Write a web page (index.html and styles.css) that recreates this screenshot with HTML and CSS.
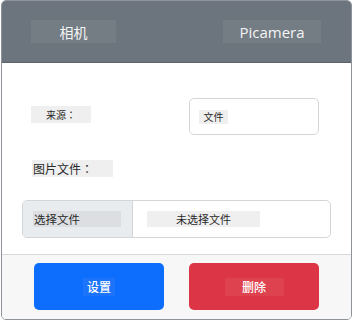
FILE: index.html
```html
<!DOCTYPE html>
<html lang="zh">
<head>
<meta charset="utf-8">
<link rel="stylesheet" href="styles.css">
</head>
<body>
<div class="card">
  <div class="card-header">
    <span class="hlabel hlabel-left">相机</span>
    <span class="hlabel hlabel-right">Picamera</span>
  </div>
  <div class="card-body">
    <div class="row-source">
      <span class="lbl lbl-source">来源<span class="colon" lang="ja">：</span></span>
      <div class="select-box"><span class="sel-text">文件</span></div>
    </div>
    <div class="row-label">
      <span class="lbl lbl-file">图片文件<span class="colon" lang="ja">：</span></span>
    </div>
    <div class="file-input">
      <div class="file-btn"><span class="file-btn-text">选择文件</span></div>
      <div class="file-name"><span class="file-name-text">未选择文件</span></div>
    </div>
  </div>
  <div class="card-footer">
    <button class="btn btn-blue"><span class="btn-text btn-text-blue">设置</span></button>
    <button class="btn btn-red"><span class="btn-text btn-text-red">删除</span></button>
  </div>
</div>
</body>
</html>
```
FILE: styles.css
```css
* { box-sizing: border-box; }
html, body { margin: 0; padding: 0; background: #ffffff; }
body {
  font-family: "Noto Sans", "Noto Sans CJK SC", sans-serif;
  width: 353px;
  height: 320px;
}
.card {
  margin-left: 1px;
  width: 351px;
  height: 320px;
  border: 1px solid #8e9399;
  border-radius: 5px;
  overflow: hidden;
  display: flex;
  flex-direction: column;
  background: #fff;
}
.card-header {
  height: 62px;
  background: #6c757d;
  border-bottom: 1px solid #5c646b;
  display: flex;
  align-items: flex-start;
  justify-content: space-between;
  padding: 19px 30px 0 29px;
}
.hlabel {
  height: 23px;
  background: #747c84;
  color: #f4f5f6;
  display: flex;
  align-items: center;
  justify-content: center;
  font-family: "Open Sans", "Noto Sans CJK SC", sans-serif;
}
.hlabel-left { width: 85px; font-size: 14px; font-family: "Noto Sans CJK SC", sans-serif; }
.hlabel-right { width: 98px; font-size: 15px; font-weight: 500; }
.card-body {
  flex: 1;
  padding: 35px 20px 0 20px;
  font-family: "Noto Sans CJK SC", sans-serif;
  color: #2a2a2a;
}
.row-source {
  display: flex;
  align-items: center;
  height: 37px;
}
.lbl {
  background: #efefef;
  display: flex;
  align-items: center;
  height: 17px;
}
.colon {
  font-family: "Noto Sans CJK JP", "Noto Sans CJK TC", sans-serif;
}
.lbl-source {
  margin-left: 9px;
  width: 60px;
  font-size: 10px;
  justify-content: center;
  margin-top: -5px;
}
.select-box {
  margin-left: 98px;
  width: 130px;
  height: 37px;
  border: 1px solid #d3d6d9;
  border-radius: 5px;
  display: flex;
  align-items: center;
  padding-left: 9px;
}
.sel-text {
  background: #efefef;
  font-size: 10px;
  width: 29px;
  height: 14px;
  display: flex;
  align-items: center;
  justify-content: center;
}
.row-label {
  margin-top: 25px;
  height: 17px;
}
.lbl-file {
  margin-left: 10px;
  width: 81px;
  font-size: 12px;
  padding-left: 1px;
}
.file-input {
  margin-top: 23px;
  height: 38px;
  border: 1px solid #d3d6d9;
  border-radius: 5px;
  display: flex;
  overflow: hidden;
}
.file-btn {
  width: 110px;
  background: #e9ecef;
  border-right: 1px solid #d3d6d9;
  display: flex;
  align-items: center;
  padding-left: 10px;
}
.file-btn-text {
  width: 88px;
  height: 16px;
  background: #dcdee1;
  font-size: 11.5px;
  display: flex;
  align-items: center;
  padding-left: 1px;
}
.file-name {
  flex: 1;
  display: flex;
  align-items: center;
  padding-left: 14px;
}
.file-name-text {
  width: 113px;
  height: 16px;
  background: #efefef;
  font-size: 11px;
  display: flex;
  align-items: center;
  justify-content: center;
}
.card-footer {
  height: 65px;
  background: #f7f7f7;
  border-top: 1px solid #d8d8d8;
  display: flex;
  gap: 25px;
  padding: 8px 0 0 32px;
}
.btn {
  width: 130px;
  height: 47px;
  border: none;
  border-radius: 5px;
  display: flex;
  align-items: center;
  justify-content: center;
  padding: 0;
  font-family: "Noto Sans CJK SC", sans-serif;
  color: #fff;
  font-size: 12px;
  font-weight: 500;
}
.btn-blue { background: #0d6efd; }
.btn-red { background: #dc3545; }
.btn-text {
  height: 18px;
  display: flex;
  align-items: center;
  justify-content: center;
}
.btn-text-blue { width: 32px; background: #1b74fa; }
.btn-text-red { width: 59px; background: #df424f; }
```
